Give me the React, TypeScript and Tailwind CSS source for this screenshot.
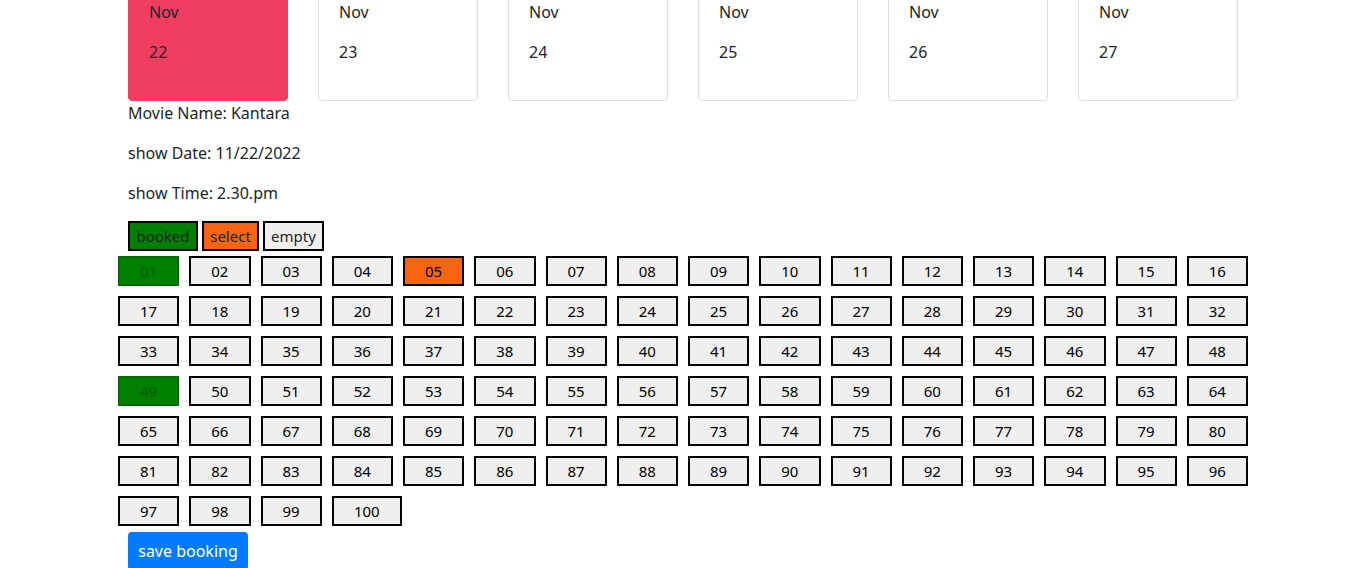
import React from "react";

const days = ["22", "23", "24", "25", "26", "27"];
const booked = new Set([1, 49]);
const selected = new Set([5]);

export default function App() {
  const seats = Array.from({ length: 100 }, (_, i) => i + 1);
  return (
    <div
      className="min-h-screen bg-white text-[#212529] text-[16px] leading-6 overflow-hidden"
      style={{ fontFamily: '"Noto Sans", "Open Sans", sans-serif' }}
    >
      <div className="w-[1140px] mx-auto px-[15px] mt-[-21px]">
        <div className="flex mx-[-15px]">
          {days.map((d, i) => (
            <div key={d} className="w-[190px] px-[15px]">
              <div
                className={
                  "h-[122px] rounded-[4px] border p-5 " +
                  (i === 0 ? "bg-[#ef3e60] border-[#ef3e60]" : "bg-white border-[#dfdfdf]")
                }
              >
                <p className="mb-4">Nov</p>
                <p className="mb-4">{d}</p>
              </div>
            </div>
          ))}
        </div>
        <p className="mb-4">Movie Name: Kantara</p>
        <p className="mb-4">show Date: 11/22/2022</p>
        <p className="mb-4">show Time: 2.30.pm</p>
        <div className="flex gap-1 text-[15px]">
          <div className="h-[30px] w-[70px] border-2 border-black bg-[#008000] flex items-center justify-center">booked</div>
          <div className="h-[30px] w-[57px] border-2 border-black bg-[#f76512] flex items-center justify-center">select</div>
          <div className="h-[30px] w-[61px] border-2 border-black bg-[#efefef] flex items-center justify-center">empty</div>
        </div>
        <div className="flex flex-wrap mx-[-15px] text-[15px]">
          {seats.map((n) => {
            const label = n < 10 ? "0" + n : String(n);
            const isBooked = booked.has(n);
            const isSel = selected.has(n);
            return (
              <div key={n} className={n === 100 ? "px-[5px] py-[5px]" : "w-[71.25px] px-[5px] py-[5px]"}>
                <div
                  className={
                    "h-[30px] border-2 flex items-center justify-center " +
                    (n === 100 ? "w-[70px] " : "w-full ") +
                    (isBooked
                      ? "bg-[#008000] border-[#006c00] text-[#005a00]"
                      : isSel
                      ? "bg-[#f76512] border-black text-black"
                      : "bg-[#efefef] border-black text-black")
                  }
                >
                  {label}
                </div>
              </div>
            );
          })}
        </div>
        <button className="mt-[1px] h-[38px] w-[120px] rounded-[4px] bg-[#007bff] text-white text-[16px]">
          save booking
        </button>
      </div>
    </div>
  );
}
